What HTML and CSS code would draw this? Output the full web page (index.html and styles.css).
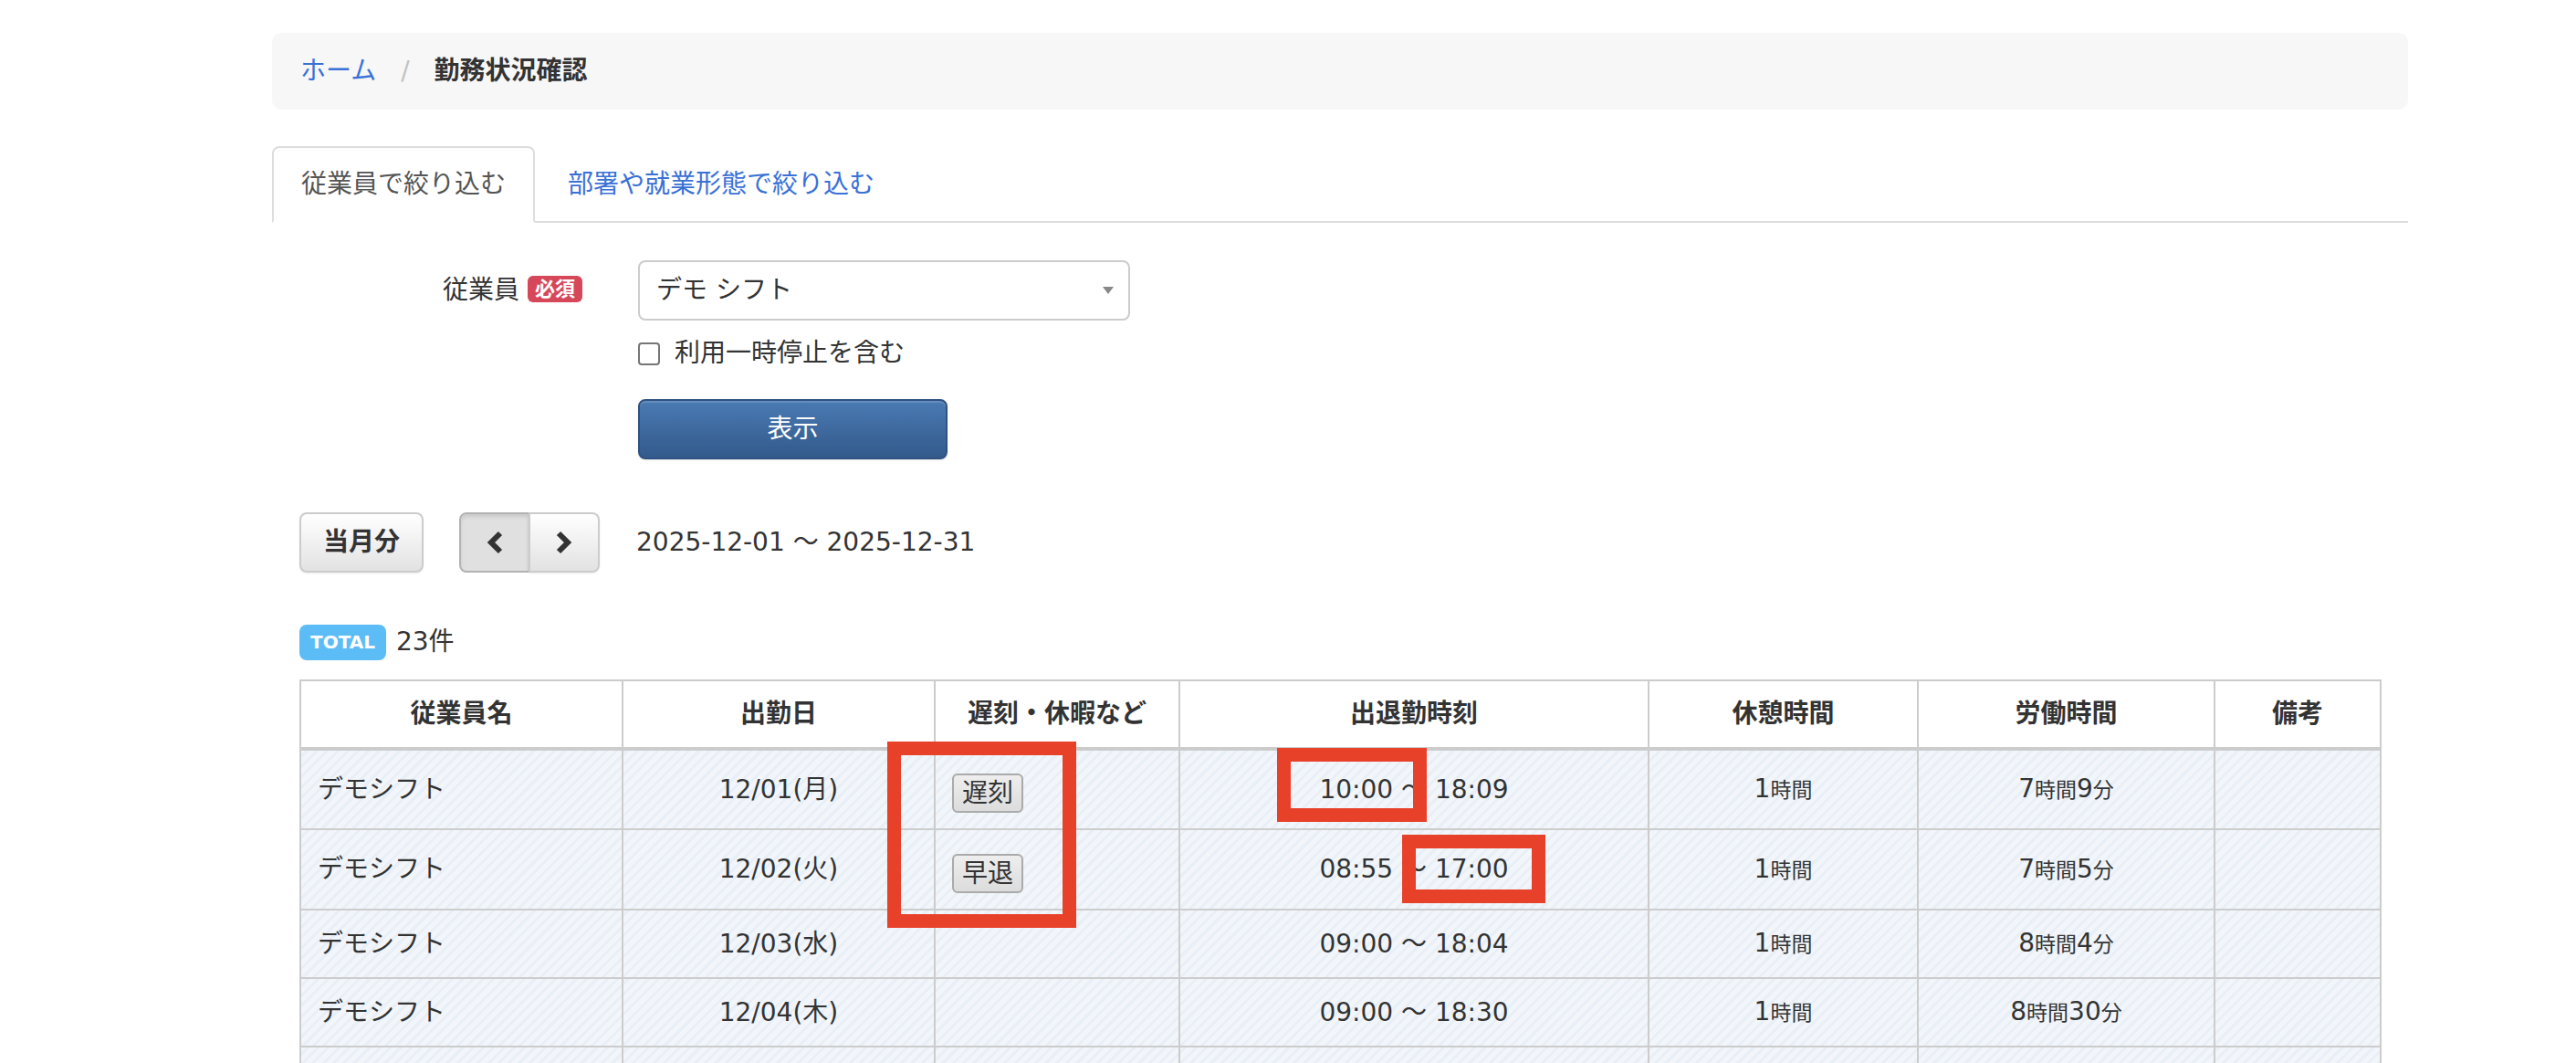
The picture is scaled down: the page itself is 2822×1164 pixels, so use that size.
FILE: index.html
```html
<!DOCTYPE html>
<html lang="ja">
<head>
  <meta charset="UTF-8">
  <meta name="viewport" content="width=device-width, initial-scale=1.0">
  <title>勤務状況確認</title>
  <link rel="stylesheet" href="styles.css">
</head>
<body>
  <div class="page">
    <!-- パンくず -->
    <ol class="breadcrumb">
      <li><a href="#">ホーム</a></li>
      <li class="sep">/</li>
      <li class="current">勤務状況確認</li>
    </ol>

    <!-- 絞り込みタブ -->
    <ul class="tabs">
      <li class="tab active">従業員で絞り込む</li>
      <li class="tab"><a href="#">部署や就業形態で絞り込む</a></li>
    </ul>

    <div class="panel">
      <form class="filter">
        <div class="form-row">
          <label class="form-label">従業員 <span class="badge-required">必須</span></label>
          <div class="form-controls">
            <div class="select">
              <span>デモ シフト</span>
              <span class="select-arrow"></span>
            </div>
            <label class="check"><span class="checkbox"></span>利用一時停止を含む</label>
            <button type="button" class="btn-primary">表示</button>
          </div>
        </div>
      </form>

      <!-- 期間切り替え -->
      <div class="toolbar">
        <button type="button" class="btn">当月分</button>
        <div class="btn-group">
          <button type="button" class="btn btn-icon pressed">
            <svg width="18" height="26" viewBox="0 0 18 26"><path d="M15 3 L5 13 L15 23" fill="none" stroke="#333" stroke-width="6"/></svg>
          </button>
          <button type="button" class="btn btn-icon">
            <svg width="18" height="26" viewBox="0 0 18 26"><path d="M3 3 L13 13 L3 23" fill="none" stroke="#333" stroke-width="6"/></svg>
          </button>
        </div>
        <span class="range">2025-12-01 ～ 2025-12-31</span>
      </div>

      <div class="count">
        <span class="badge-total">TOTAL</span>
        <span>23件</span>
      </div>

      <!-- 勤務一覧 -->
      <div class="table-wrap">
        <table class="attendance">
          <colgroup>
            <col class="c-name">
            <col class="c-date">
            <col class="c-tags">
            <col class="c-time">
            <col class="c-break">
            <col class="c-work">
            <col class="c-note">
          </colgroup>
          <thead>
            <tr>
              <th>従業員名</th>
              <th>出勤日</th>
              <th>遅刻・休暇など</th>
              <th>出退勤時刻</th>
              <th>休憩時間</th>
              <th>労働時間</th>
              <th>備考</th>
            </tr>
          </thead>
          <tbody>
            <tr class="tall">
              <td class="name">デモシフト</td>
              <td>12/01(月)</td>
              <td class="tags"><span class="tag">遅刻</span></td>
              <td>10:00 ～ 18:09</td>
              <td>1<small>時間</small></td>
              <td>7<small>時間</small>9<small>分</small></td>
              <td></td>
            </tr>
            <tr class="tall">
              <td class="name">デモシフト</td>
              <td>12/02(火)</td>
              <td class="tags"><span class="tag">早退</span></td>
              <td>08:55 ～ 17:00</td>
              <td>1<small>時間</small></td>
              <td>7<small>時間</small>5<small>分</small></td>
              <td></td>
            </tr>
            <tr>
              <td class="name">デモシフト</td>
              <td>12/03(水)</td>
              <td class="tags"></td>
              <td>09:00 ～ 18:04</td>
              <td>1<small>時間</small></td>
              <td>8<small>時間</small>4<small>分</small></td>
              <td></td>
            </tr>
            <tr>
              <td class="name">デモシフト</td>
              <td>12/04(木)</td>
              <td class="tags"></td>
              <td>09:00 ～ 18:30</td>
              <td>1<small>時間</small></td>
              <td>8<small>時間</small>30<small>分</small></td>
              <td></td>
            </tr>
            <tr>
              <td class="name">デモシフト</td>
              <td>12/05(金)</td>
              <td class="tags"></td>
              <td>09:00 ～ 18:00</td>
              <td>1<small>時間</small></td>
              <td>8<small>時間</small></td>
              <td></td>
            </tr>
          </tbody>
        </table>

        <!-- 注釈の赤枠 -->
        <div class="mark mark-tags"></div>
        <div class="mark mark-start"></div>
        <div class="mark mark-end"></div>
      </div>
    </div>
  </div>
</body>
</html>
```

FILE: styles.css
```css
body {
  margin: 0;
  font-family: "DejaVu Sans", "Noto Sans CJK JP", sans-serif;
  font-size: 28px;
  line-height: 40px;
  color: #333;
  background-color: #fff;
}
.page {
  width: 2340px;
  margin: 36px 0 0 298px;
}
a {
  color: #3a71d6;
  text-decoration: none;
}

/* パンくず */
.breadcrumb {
  display: flex;
  gap: 27px;
  list-style: none;
  margin: 0 0 40px;
  padding: 22px 31px;
  background-color: #f7f7f7;
  border-radius: 10px;
}
.breadcrumb .sep {
  color: #c2c2c2;
}
.breadcrumb .current {
  font-weight: bold;
}

/* タブ */
.tabs {
  display: flex;
  list-style: none;
  margin: 0;
  padding: 0;
  border-bottom: 2px solid #ddd;
}
.tab {
  padding: 20px 30px;
  margin-right: 4px;
  margin-bottom: -2px;
  border: 2px solid transparent;
  border-radius: 8px 8px 0 0;
}
.tab.active {
  background-color: #fff;
  border-color: #ddd;
  border-bottom-color: #fff;
  color: #555;
}

.panel {
  padding: 0 30px;
}

/* 絞り込みフォーム */
.form-row {
  display: flex;
  gap: 61px;
  padding-top: 41px;
}
.form-label {
  width: 310px;
  text-align: right;
  padding-top: 13px;
}
.badge-required {
  display: inline-block;
  background-color: #d6475a;
  color: #fff;
  font-size: 22px;
  font-weight: bold;
  line-height: 29px;
  padding: 0 8px;
  border-radius: 6px;
  vertical-align: 3px;
}
.form-controls {
  display: flex;
  flex-direction: column;
  align-items: flex-start;
}
.select {
  display: flex;
  align-items: center;
  justify-content: space-between;
  box-sizing: border-box;
  width: 539px;
  height: 66px;
  padding: 0 16px 0 18px;
  border: 2px solid #ccc;
  border-radius: 8px;
  background-color: #fff;
}
.select-arrow {
  border-left: 6px solid transparent;
  border-right: 6px solid transparent;
  border-top: 8px solid #888;
}
.check {
  display: flex;
  align-items: center;
  gap: 16px;
  margin-top: 16px;
}
.checkbox {
  box-sizing: border-box;
  width: 24px;
  height: 25px;
  border: 2px solid #767676;
  border-radius: 4px;
}
.btn-primary {
  box-sizing: border-box;
  width: 339px;
  height: 66px;
  margin-top: 30px;
  font: inherit;
  color: #fff;
  background: linear-gradient(#4a7ab3, #335a8b);
  border: 2px solid #2f5282;
  border-radius: 8px;
  box-shadow: inset 0 2px 0 rgba(255, 255, 255, 0.15), 0 1px 2px rgba(0, 0, 0, 0.1);
}

/* 期間切り替え */
.toolbar {
  display: flex;
  align-items: center;
  margin-top: 58px;
}
.btn {
  box-sizing: border-box;
  height: 66px;
  padding: 0 24px;
  font: inherit;
  font-weight: bold;
  color: #333;
  background: linear-gradient(#fff, #e2e2e2);
  border: 2px solid #ccc;
  border-radius: 8px;
  box-shadow: 0 1px 2px rgba(0, 0, 0, 0.08);
}
.btn-group {
  display: flex;
  margin-left: 39px;
}
.btn-icon {
  width: 78px;
  padding: 0;
  display: flex;
  align-items: center;
  justify-content: center;
}
.btn-group .btn:first-child {
  border-radius: 8px 0 0 8px;
}
.btn-group .btn:last-child {
  border-radius: 0 8px 8px 0;
  margin-left: -2px;
}
.btn.pressed {
  background: #e0e0e0;
  border-color: #b3b3b3;
  box-shadow: inset 0 3px 4px rgba(0, 0, 0, 0.1);
}
.range {
  margin-left: 40px;
}

.count {
  display: flex;
  align-items: center;
  gap: 11px;
  margin-top: 56px;
}
.badge-total {
  background-color: #5cbdf6;
  color: #fff;
  font-size: 20px;
  font-weight: bold;
  line-height: 39px;
  padding: 0 12px;
  border-radius: 8px;
}

/* 一覧テーブル */
.table-wrap {
  position: relative;
  width: 2279px;
  margin-top: 21px;
}
.attendance {
  width: 2279px;
  border-collapse: collapse;
  table-layout: fixed;
}
.c-name { width: 353px; }
.c-date { width: 342px; }
.c-tags { width: 268px; }
.c-time { width: 514px; }
.c-break { width: 295px; }
.c-work { width: 325px; }
.c-note { width: 182px; }
.attendance th,
.attendance td {
  border: 2px solid #ccc;
  padding: 16px 18px;
  text-align: center;
}
.attendance thead th {
  border-bottom-width: 4px;
  background-color: #fff;
}
.attendance tbody tr {
  height: 74px;
  background: repeating-linear-gradient(135deg, #f2f6fa 0, #f2f6fa 5px, #e9eff6 5px, #e9eff6 8px);
}
.attendance tbody tr.tall {
  height: 88px;
}
.attendance td.name,
.attendance td.tags {
  text-align: left;
}
.attendance small {
  font-size: 23px;
}
.tag {
  display: inline-block;
  padding: 0 9px;
  line-height: 39px;
  border: 2px solid #aaa;
  border-radius: 6px;
  background: linear-gradient(#eee, #dcdcdc);
  vertical-align: middle;
  margin-top: 8px;
}

/* 注釈の赤枠 */
.mark {
  position: absolute;
  box-sizing: border-box;
  border: 15px solid #e8412a;
}
.mark-tags {
  left: 644px;
  top: 68px;
  width: 207px;
  height: 204px;
}
.mark-start {
  left: 1071px;
  top: 75px;
  width: 164px;
  height: 81px;
}
.mark-end {
  left: 1208px;
  top: 170px;
  width: 157px;
  height: 75px;
}
```
